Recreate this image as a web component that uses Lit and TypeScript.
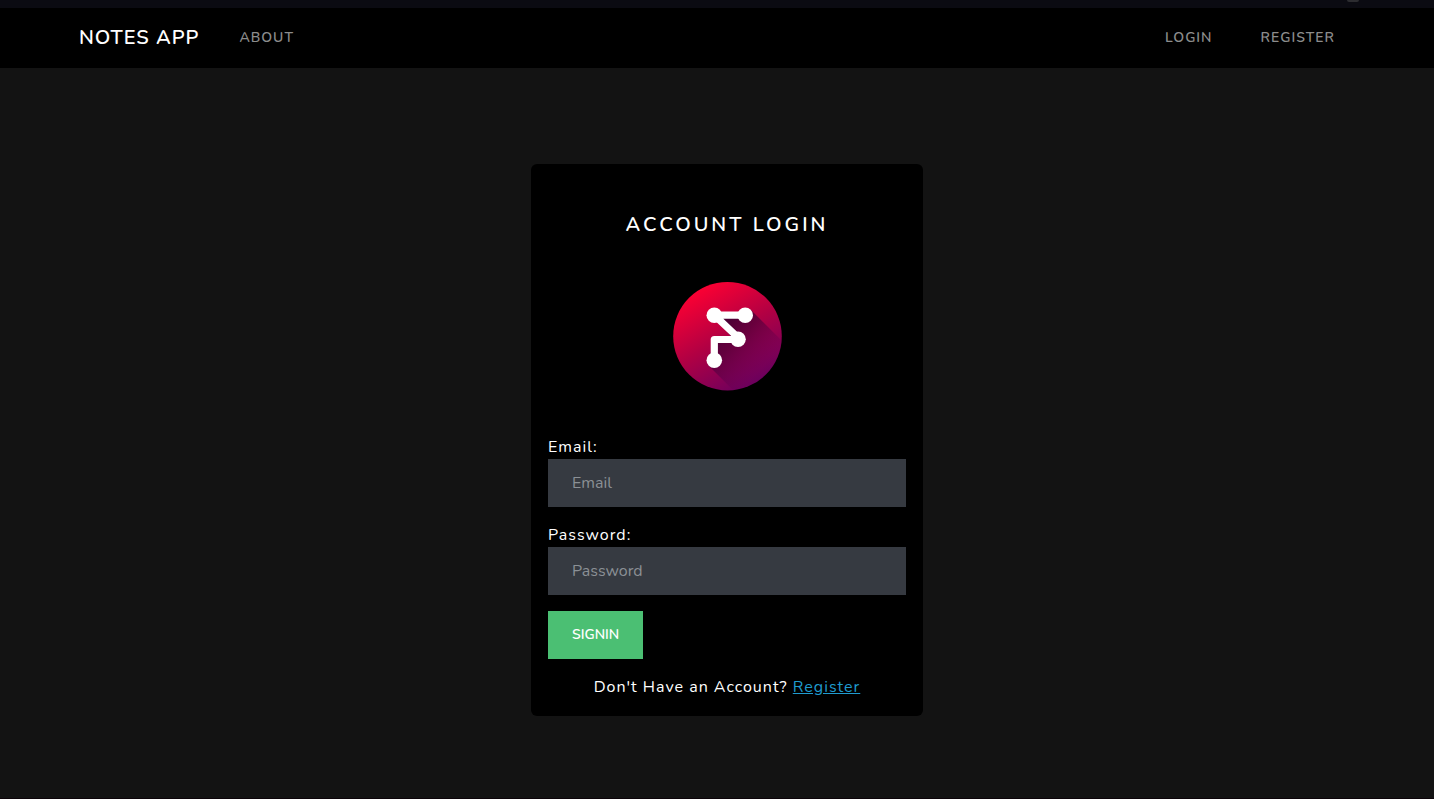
import { LitElement, html, css } from "lit";
import { customElement } from "lit/decorators.js";

@customElement("notes-logo")
export class NotesLogo extends LitElement {
  static styles = css`
    :host {
      display: block;
      line-height: 0;
    }
    .mark {
      width: 110px;
      height: 110px;
    }
  `;

  render() {
    return html`
      <svg class="mark" viewBox="0 0 110 110" role="img" aria-label="Notes App logo">
        <defs>
          <linearGradient id="disc" x1="0.2" y1="0.06" x2="0.72" y2="0.96">
            <stop offset="0" stop-color="#ff0032" />
            <stop offset="0.5" stop-color="#b20043" />
            <stop offset="1" stop-color="#6c005e" />
          </linearGradient>
          <linearGradient id="shade" gradientUnits="userSpaceOnUse" x1="46" y1="50" x2="86" y2="90">
            <stop offset="0" stop-color="#3c0034" stop-opacity="0.88" />
            <stop offset="0.35" stop-color="#3e0038" stop-opacity="0.62" />
            <stop offset="1" stop-color="#5a0052" stop-opacity="0.1" />
          </linearGradient>
          <clipPath id="round"><circle cx="55.5" cy="55.2" r="54.3" /></clipPath>
        </defs>
        <circle cx="55.5" cy="55.2" r="54.3" fill="url(#disc)" />
        <g clip-path="url(#round)">
          <path d="M42 33 H73 L79 29 L139 89 V150 H102 L36 84 L42 57 H60 Z" fill="url(#shade)" />
        </g>
        <path d="M73.2 34.2 H42.3 L66 56.5 M66 58.5 H42.3 V79.3" fill="none" stroke="#fff" stroke-width="7.2" stroke-linejoin="round" />
        <circle cx="42.3" cy="34.2" r="7.8" fill="#fff" />
        <circle cx="73.2" cy="34.2" r="7.8" fill="#fff" />
        <circle cx="66" cy="58.2" r="7.8" fill="#fff" />
        <circle cx="42.3" cy="79.3" r="7.8" fill="#fff" />
      </svg>
    `;
  }
}

@customElement("app-root")
export class AppRoot extends LitElement {
  static styles = css`
    :host {
      display: flex;
      flex-direction: column;
      min-height: 100vh;
      box-sizing: border-box;
      background: #131313;
      color: #fff;
      font-family: Nunito, Lato, sans-serif;
      font-size: 16px;
      line-height: 24px;
      letter-spacing: 1px;
    }
    .strip {
      display: flex;
      justify-content: flex-end;
      height: 8px;
      padding-right: 75px;
      background: #0b0b12;
    }
    .grip {
      width: 12px;
      height: 2px;
      border-radius: 0 0 2px 2px;
      background: #2c2c30;
    }
    .bar {
      display: flex;
      align-items: center;
      min-height: 60px;
      padding: 0 75px 0 79px;
      box-sizing: border-box;
      background: #000;
      text-transform: uppercase;
    }
    .brand {
      margin-right: 16px;
      color: #fff;
      font-size: 20px;
      font-weight: 600;
      text-decoration: none;
    }
    .links {
      display: flex;
      margin: 0;
      padding: 0;
      list-style: none;
    }
    .links.end {
      margin-left: auto;
    }
    .link {
      display: block;
      padding: 0 24px;
      color: #8c8c8c;
      font-size: 14px;
      font-weight: 600;
      text-decoration: none;
    }
    .page {
      display: flex;
      flex: 1;
      justify-content: center;
      align-items: flex-start;
      padding: 96px 0 80px 20px;
      border-bottom: 1px solid #0c0409;
    }
    .card {
      width: 392px;
      max-width: 100%;
      box-sizing: border-box;
      padding: 49px 17px 17px;
      border-radius: 6px;
      background: #000;
    }
    .title {
      margin: 0 0 44px;
      font-size: 20px;
      font-weight: 600;
      letter-spacing: 3px;
      text-align: center;
      text-transform: uppercase;
    }
    .logo {
      margin: 0 auto 44px;
      width: 110px;
    }
    .field {
      margin-bottom: 16px;
    }
    .label {
      display: block;
    }
    .input {
      display: block;
      width: 100%;
      height: 48px;
      box-sizing: border-box;
      padding: 0 24px;
      border: 0;
      border-radius: 0;
      background: #363a41;
      color: #fff;
      font: inherit;
      letter-spacing: normal;
    }
    .input::placeholder {
      color: #8b9095;
      opacity: 1;
    }
    .submit {
      display: block;
      height: 48px;
      margin-bottom: 16px;
      padding: 0 24px 2px;
      border: 0;
      background: #4bbf73;
      color: #fff;
      font-family: inherit;
      font-size: 14px;
      font-weight: 600;
      text-transform: uppercase;
      cursor: pointer;
    }
    .note {
      margin: 0;
      text-align: center;
    }
    .register {
      color: #1f9bcf;
    }
  `;

  render() {
    return html`
      <div class="strip"><span class="grip"></span></div>
      <nav class="bar">
        <a class="brand" href="#">Notes App</a>
        <ul class="links">
          <li><a class="link" href="#about">About</a></li>
        </ul>
        <ul class="links end">
          <li><a class="link" href="#login">Login</a></li>
          <li><a class="link" href="#register">Register</a></li>
        </ul>
      </nav>
      <main class="page">
        <section class="card">
          <h1 class="title">Account Login</h1>
          <notes-logo class="logo"></notes-logo>
          <form @submit=${(event: Event) => event.preventDefault()}>
            <div class="field">
              <label class="label" for="email">Email:</label>
              <input class="input" id="email" type="email" placeholder="Email" />
            </div>
            <div class="field">
              <label class="label" for="password">Password:</label>
              <input class="input" id="password" type="password" placeholder="Password" />
            </div>
            <button class="submit" type="submit">Signin</button>
          </form>
          <p class="note">Don't Have an Account? <a class="register" href="#register">Register</a></p>
        </section>
      </main>
    `;
  }
}
